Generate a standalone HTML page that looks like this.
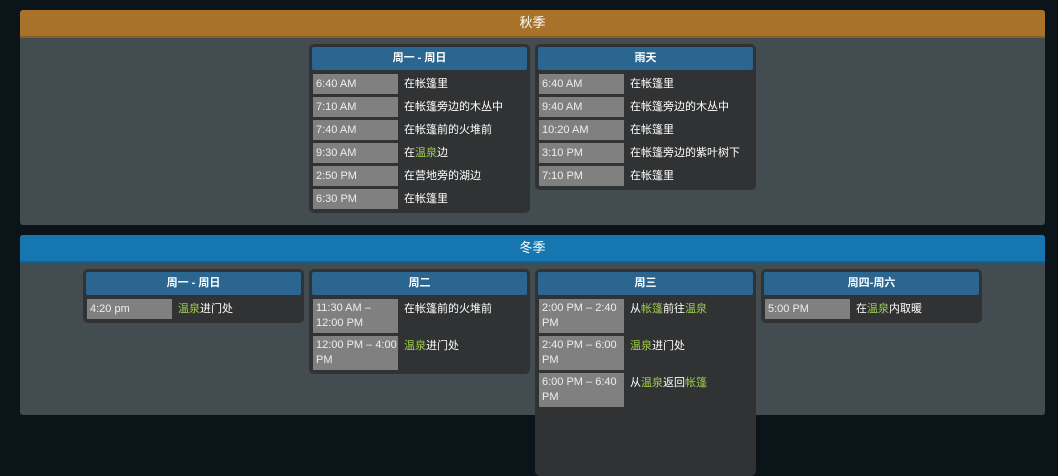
<!DOCTYPE html><html><head><meta charset="utf-8"><style>
body{margin:0;width:1058px;height:400px;background:#0b1419;font-family:"Liberation Sans","Noto Sans CJK SC",sans-serif;overflow:hidden;position:relative}
.sec{position:absolute;left:20px;width:1025px;background:#434c51;border-radius:3px;overflow:hidden}
.hd{height:26px;line-height:26px;text-align:center;color:#fff;font-size:13px}
.card{position:absolute;width:221px;background:#313233;border-radius:5px;padding:3px 0 4px}
.ch{margin:0 3px;height:23px;line-height:23px;background:#2a6690;color:#fff;text-align:center;font-size:11px;font-weight:bold;border-radius:2px}
.r{display:flex;margin:4px 0 0 4px;font-size:11px;color:#fff}
.r+.r{margin-top:3px}
.t{width:85px;height:20px;line-height:20px;background:#808080;color:#eee;padding-left:3px;box-sizing:border-box;flex:none}
.t2{height:34px;line-height:15px;padding-top:2px}
.d{padding-left:6px;line-height:20px}
.g{color:#9dcc4a}
</style></head><body>
<div class="sec" style="top:10px;height:215px"><div class="hd" style="background:#a8722a;border-bottom:2px solid #8a5d22">秋季</div></div>
<div class="card" style="left:309px;top:44px">
<div class="ch">周一 - 周日</div>
<div class="r"><div class="t">6:40 AM</div><div class="d">在帐篷里</div></div>
<div class="r"><div class="t">7:10 AM</div><div class="d">在帐篷旁边的木丛中</div></div>
<div class="r"><div class="t">7:40 AM</div><div class="d">在帐篷前的火堆前</div></div>
<div class="r"><div class="t">9:30 AM</div><div class="d">在<span class="g">温泉</span>边</div></div>
<div class="r"><div class="t">2:50 PM</div><div class="d">在营地旁的湖边</div></div>
<div class="r"><div class="t">6:30 PM</div><div class="d">在帐篷里</div></div>
</div>
<div class="card" style="left:535px;top:44px">
<div class="ch">雨天</div>
<div class="r"><div class="t">6:40 AM</div><div class="d">在帐篷里</div></div>
<div class="r"><div class="t">9:40 AM</div><div class="d">在帐篷旁边的木丛中</div></div>
<div class="r"><div class="t">10:20 AM</div><div class="d">在帐篷里</div></div>
<div class="r"><div class="t">3:10 PM</div><div class="d">在帐篷旁边的紫叶树下</div></div>
<div class="r"><div class="t">7:10 PM</div><div class="d">在帐篷里</div></div>
</div>
<div class="sec" style="top:235px;height:180px"><div class="hd" style="background:#1677b0;border-bottom:2px solid #1a5f88">冬季</div></div>
<div class="card" style="left:83px;top:269px">
<div class="ch">周一 - 周日</div>
<div class="r"><div class="t">4:20 pm</div><div class="d"><span class="g">温泉</span>进门处</div></div>
</div>
<div class="card" style="left:309px;top:269px">
<div class="ch">周二</div>
<div class="r"><div class="t t2">11:30 AM – 12:00 PM</div><div class="d" style="line-height:15px;padding-top:3px">在帐篷前的火堆前</div></div>
<div class="r"><div class="t t2">12:00 PM – 4:00 PM</div><div class="d" style="line-height:15px;padding-top:3px"><span class="g">温泉</span>进门处</div></div>
</div>
<div class="card" style="left:535px;top:269px;height:200px">
<div class="ch">周三</div>
<div class="r"><div class="t t2">2:00 PM – 2:40 PM</div><div class="d" style="line-height:15px;padding-top:3px">从<span class="g">帐篷</span>前往<span class="g">温泉</span></div></div>
<div class="r"><div class="t t2">2:40 PM – 6:00 PM</div><div class="d" style="line-height:15px;padding-top:3px"><span class="g">温泉</span>进门处</div></div>
<div class="r"><div class="t t2">6:00 PM – 6:40 PM</div><div class="d" style="line-height:15px;padding-top:3px">从<span class="g">温泉</span>返回<span class="g">帐篷</span></div></div>
</div>
<div class="card" style="left:761px;top:269px">
<div class="ch">周四-周六</div>
<div class="r"><div class="t">5:00 PM</div><div class="d">在<span class="g">温泉</span>内取暖</div></div>
</div>
</body></html>
